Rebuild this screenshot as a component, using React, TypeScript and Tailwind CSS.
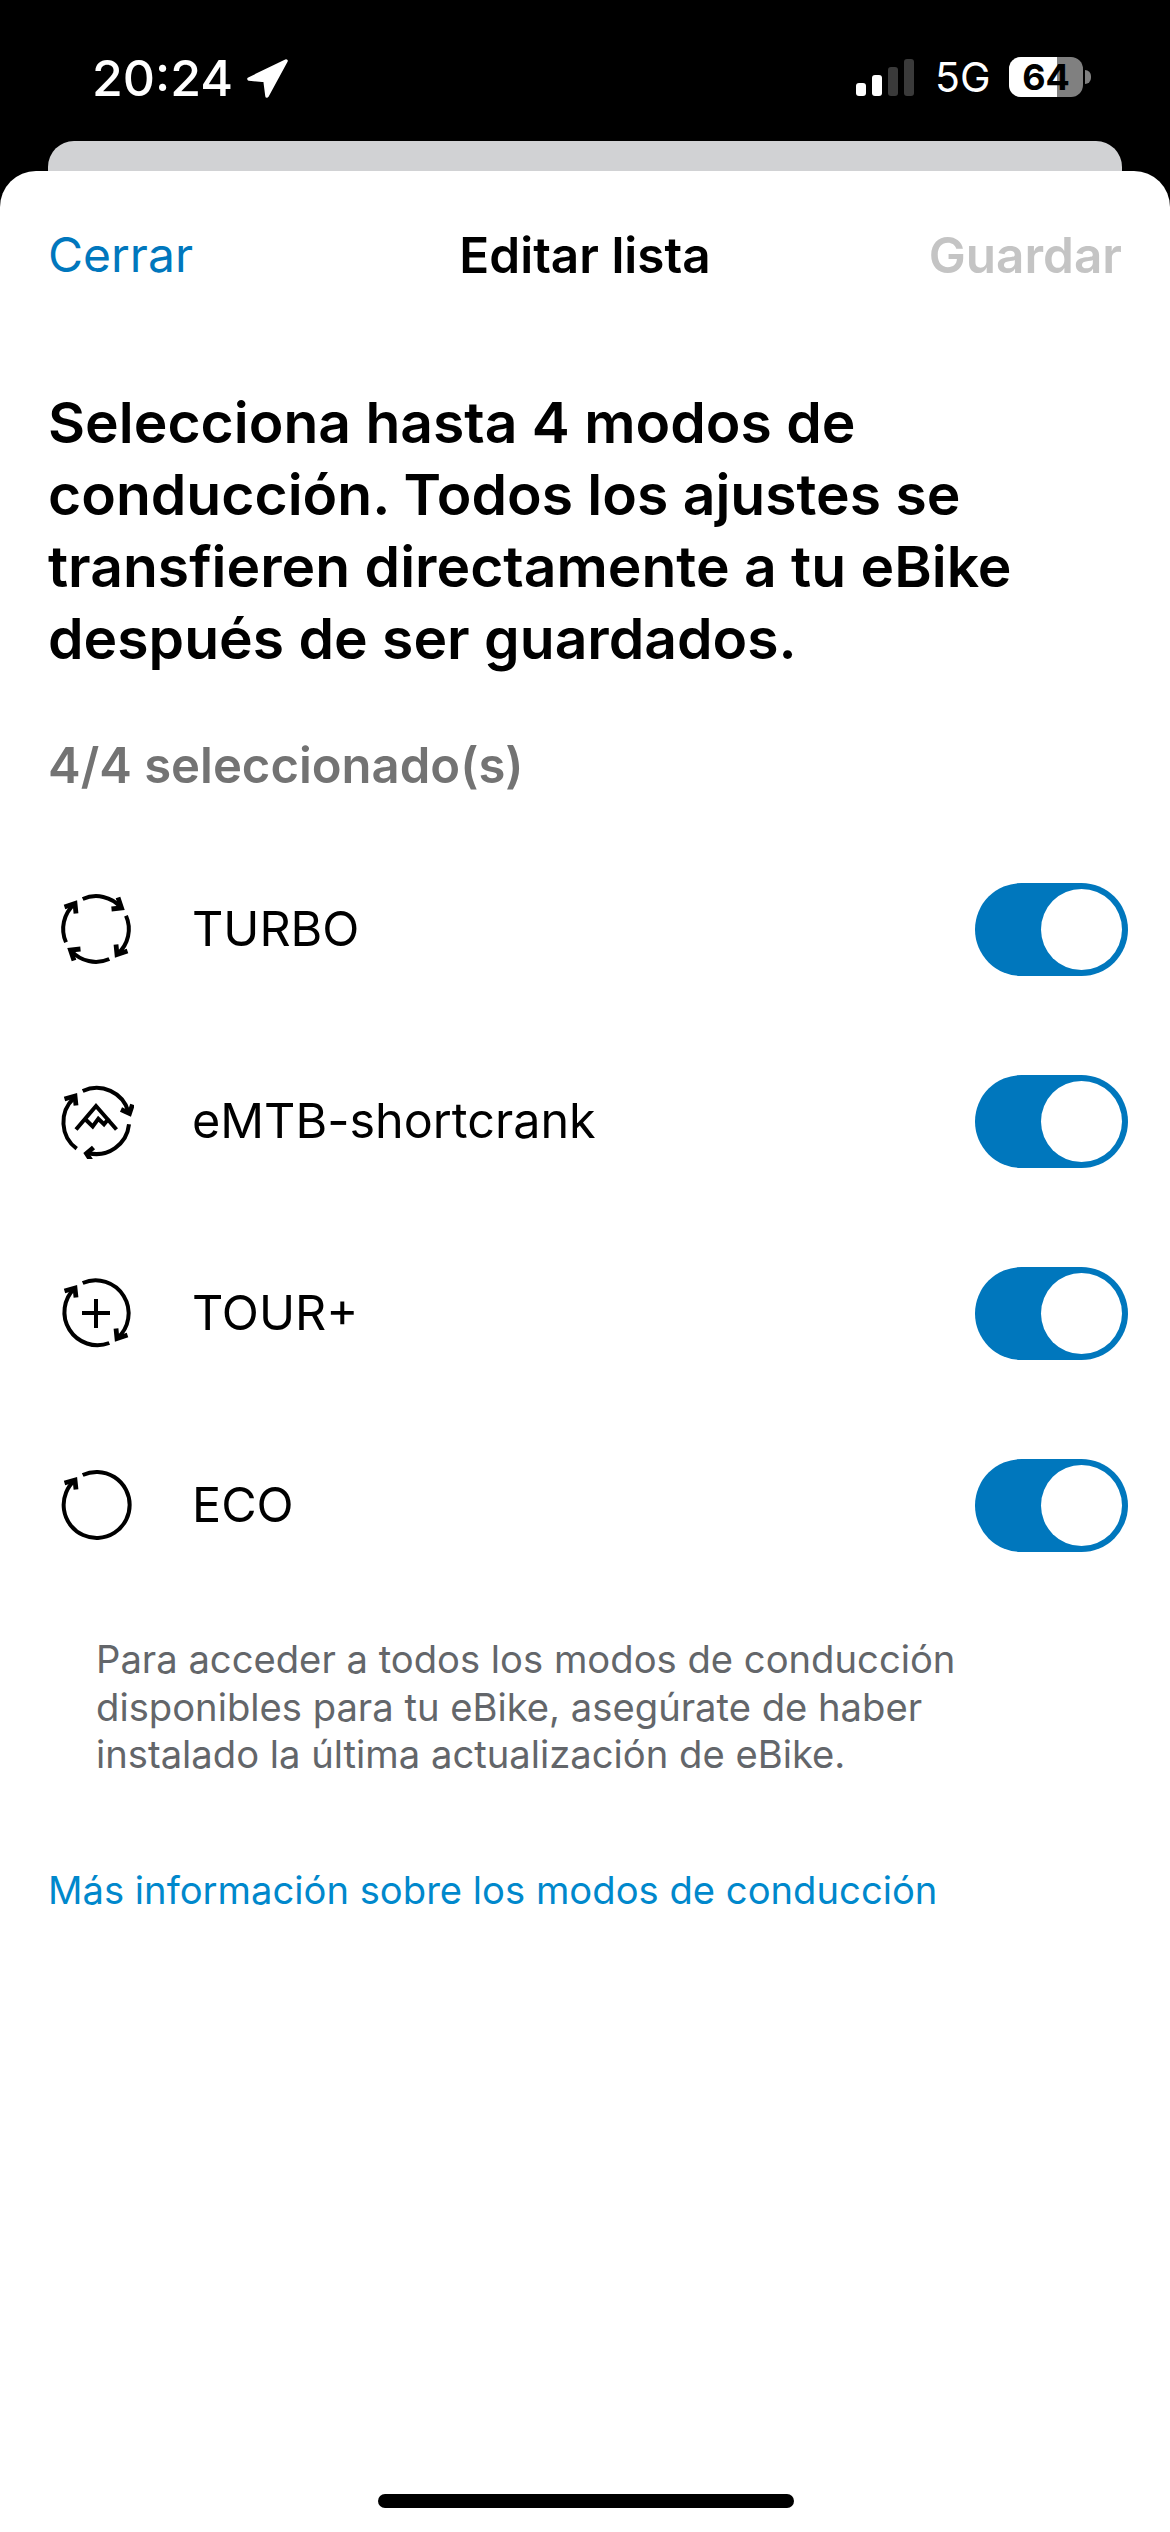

import React from "react";

const BLUE = "#0077bd";

function Icon({ kind }: { kind: string }) {
  return (
    <svg width="76" height="76" viewBox="0 0 76 76" fill="none" stroke="#000" strokeWidth="4" className="shrink-0">
      {kind === "turbo" && (
        <>
          {[0, 90, 180, 270].map((r) => (
            <g key={r} transform={`rotate(${r} 38 38)`}>
              <path d="M24.7 8 A33 33 0 0 1 63 16.5" />
              <path d="M60 6.5 L63.5 17 L53.5 18" strokeWidth="4.8" />
            </g>
          ))}
        </>
      )}
      {kind === "emtb" && (
        <>
          <path d="M24.7 8 A33 33 0 0 1 70.5 29" />
          <path d="M74.5 21.5 L71.5 30.5 L63 26.5" strokeWidth="4.8" />
          <path d="M71 41.3 A33 33 0 0 1 30 70" />
          <path d="M35.5 64.5 L28.5 70.5 L33 77.5" strokeWidth="4.8" />
          <path d="M18.7 65.7 A33 33 0 0 1 16 15" />
          <path d="M6.5 16 L17 13 L18 22.5" strokeWidth="4.8" />
          <path d="M18 46.5 L38 23 L58.5 46.5" />
          <path d="M26.3 35.3 L34.7 43.5 L40.3 35.8 L46 41.3 L51 35.3" />
        </>
      )}
      {kind === "tour" && (
        <>
          <path d="M24.7 8 A33 33 0 0 1 59 63.5" />
          <path d="M69.5 60 L59 63.5 L58 53.5" strokeWidth="4.8" />
          <path d="M51.3 68 A33 33 0 0 1 17 13" />
          <path d="M6.5 16 L17 13 L18 22.5" strokeWidth="4.8" />
          <path d="M38 24 V53 M24 38 H52" />
        </>
      )}
      {kind === "eco" && (
        <>
          <path d="M24.7 8 A33 33 0 1 1 17 13" />
          <path d="M6.5 16 L17 13 L18 22.5" strokeWidth="4.8" />
        </>
      )}
    </svg>
  );
}

function Row({ kind, label }: { kind: string; label: string }) {
  return (
    <div className="flex items-center h-[94px] mb-[98px]">
      <div className="ml-[58px] w-[76px]"><Icon kind={kind} /></div>
      <div className="flex-1 text-[48.5px] leading-[58px] text-black ml-[58px]">{label}</div>
      <div className="relative mr-[42px] w-[153px] h-[93px] rounded-full" style={{ background: BLUE }}>
        <div className="absolute right-[6px] top-[6px] w-[81px] h-[81px] rounded-full bg-white" />
      </div>
    </div>
  );
}

export default function App() {
  return (
    <div className="w-[1170px] h-[2532px] bg-black overflow-hidden relative" style={{ fontFamily: "Inter, 'Liberation Sans', sans-serif" }}>
      <div className="h-[141px] flex items-start justify-between text-white">
        <div className="flex items-start mt-[59px] ml-[92px]">
          <span className="text-[50px] leading-[38px] font-medium">20:24</span>
          <svg width="42" height="39" viewBox="0 0 42 39" className="ml-[13px]">
            <path d="M40 2 L3 20 L19 21.5 L21 37 Z" fill="#fff" stroke="#fff" strokeWidth="3.5" strokeLinejoin="round" />
          </svg>
        </div>
        <div className="flex items-start mt-[57px] mr-[79px]">
          <div className="flex items-end gap-[6px] h-[39px] w-[58px]">
            <div className="w-[10px] h-[13px] rounded-[3px] bg-white" />
            <div className="w-[10px] h-[21px] rounded-[3px] bg-white" />
            <div className="w-[10px] h-[29px] rounded-[3px] bg-[#3a3a3a]" />
            <div className="w-[10px] h-[37px] rounded-[3px] bg-[#3a3a3a]" />
          </div>
          <span className="ml-[21px] w-[52px] text-[41px] leading-[40px] font-normal">5G</span>
          <div className="relative ml-[22px] w-[74px] h-[40px] rounded-[12px] bg-[#808080] flex items-center justify-center">
            <div className="absolute left-0 top-0 bottom-0 w-[48px] rounded-l-[12px] bg-white" />
            <span className="relative text-black text-[36px] leading-[40px] font-bold">64</span>
          </div>
          <div className="ml-[2px] mt-[13px] w-[6px] h-[14px] rounded-r-full bg-[#808080]" />
        </div>
      </div>
      <div className="absolute left-[48px] right-[48px] top-[141px] h-[60px] rounded-t-[26px] bg-[#d1d2d4]" />
      <div className="absolute left-0 right-0 top-[171px] bottom-0 bg-white rounded-t-[36px]">
        <div className="relative h-[168px] flex items-center justify-between px-[48px] text-[48px] leading-[58px]">
          <span className="text-[#0077bd]">Cerrar</span>
          <span className="absolute left-0 right-0 text-center text-black font-semibold text-[49.5px]">Editar lista</span>
          <span className="text-[#c4c4c4] font-semibold text-[49.5px]">Guardar</span>
        </div>
        <div className="px-[48px] mt-[48px] text-[57px] leading-[72px] font-semibold text-black">
          Selecciona hasta 4 modos de conducción. Todos los ajustes se transfieren directamente a tu eBike después de ser guardados.
        </div>
        <div className="px-[48px] mt-[61px] text-[49px] leading-[60px] font-semibold text-[#737373]">4/4 seleccionado(s)</div>
        <div className="mt-[86px]">
          <Row kind="turbo" label="TURBO" />
          <Row kind="emtb" label="eMTB-shortcrank" />
          <Row kind="tour" label="TOUR+" />
          <Row kind="eco" label="ECO" />
        </div>
        <div className="px-[96px] -mt-[14px] text-[38.2px] leading-[47.6px] text-[#63666a]">
          Para acceder a todos los modos de conducción disponibles para tu eBike, asegúrate de haber instalado la última actualización de eBike.
        </div>
        <div className="px-[48px] mt-[87px] text-[38.2px] leading-[48px] text-[#0088cc]">Más información sobre los modos de conducción</div>
      </div>
      <div className="absolute bottom-[24px] left-[378px] w-[416px] h-[14px] rounded-full bg-black" />
    </div>
  );
}
